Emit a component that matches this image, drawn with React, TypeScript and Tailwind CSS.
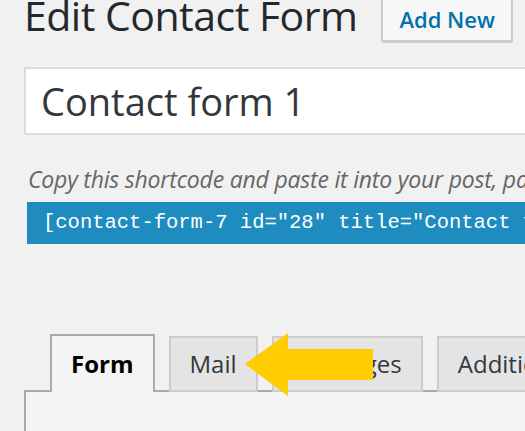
import React from "react";

export default function App() {
  const font = { fontFamily: '"Open Sans", "Noto Sans", sans-serif' };
  return (
    <div className="w-[525px] h-[431px] overflow-hidden bg-[#f1f1f1] relative" style={font}>
      <div className="flex items-start pl-[24px]">
        <h1 className="text-[41px] leading-none text-[#23282d] mt-[-5px] whitespace-nowrap tracking-[-0.5px]">Edit Contact Form</h1>
        <button className="ml-[24px] mt-[-4px] h-[46px] px-[16px] border-2 border-[#ccc] bg-[#f7f7f7] rounded-[3px] text-[#0073aa] text-[22px] font-semibold leading-none shadow-[0_1px_0_#ccc] whitespace-nowrap">
          Add New
        </button>
      </div>

      <div className="mt-[25px] ml-[24px] h-[68px] w-[520px] border-2 border-[#ddd] bg-white flex items-center pl-[15px]">
        <span className="text-[38px] text-[#32373c] leading-none whitespace-nowrap">Contact form 1</span>
      </div>

      <p className="mt-[33px] ml-[28px] text-[23px] italic text-[#666] leading-none whitespace-nowrap tracking-[-0.2px]">
        Copy this shortcode and paste it into your post, page, or text widget content:
      </p>

      <div className="mt-[11px] ml-[27px] h-[42px] w-[520px] bg-[#1e8cbe] flex items-center pl-[16px] overflow-hidden">
        <span className="text-white text-[20.5px] whitespace-nowrap" style={{ fontFamily: '"Liberation Mono", monospace' }}>
          [contact-form-7 id="28" title="Contact form 1"]
        </span>
      </div>

      <div className="mt-[90px] ml-[24px]">
        <div className="flex items-end pl-[26px] gap-[14px] relative z-10 -mb-[2px]">
          <div className="h-[58px] px-[19px] border-2 border-b-0 border-[#aaa] bg-[#f4f4f4] flex items-center text-[24px] font-bold text-black">
            Form
          </div>
          <div className="h-[56px] px-[19px] border-2 border-[#ccc] bg-[#e4e4e4] flex items-center text-[24px] text-[#32373c]">
            Mail
          </div>
          <div className="h-[56px] px-[19px] border-2 border-[#ccc] bg-[#e4e4e4] flex items-center text-[24px] text-[#32373c]">
            Messages
          </div>
          <div className="h-[56px] px-[19px] border-2 border-[#ccc] bg-[#e4e4e4] flex items-center text-[24px] text-[#32373c] whitespace-nowrap">
            Additional Settings
          </div>
        </div>
        <div className="h-[60px] border-t-2 border-l-2 border-[#aaa] bg-[#f4f4f4]" />
      </div>

      <svg className="absolute left-0 top-0 pointer-events-none z-20" width="525" height="431">
        <polygon points="245,364 288,333 288,349 373,349 373,380 288,380 288,396" fill="#ffcc00" />
      </svg>
    </div>
  );
}
